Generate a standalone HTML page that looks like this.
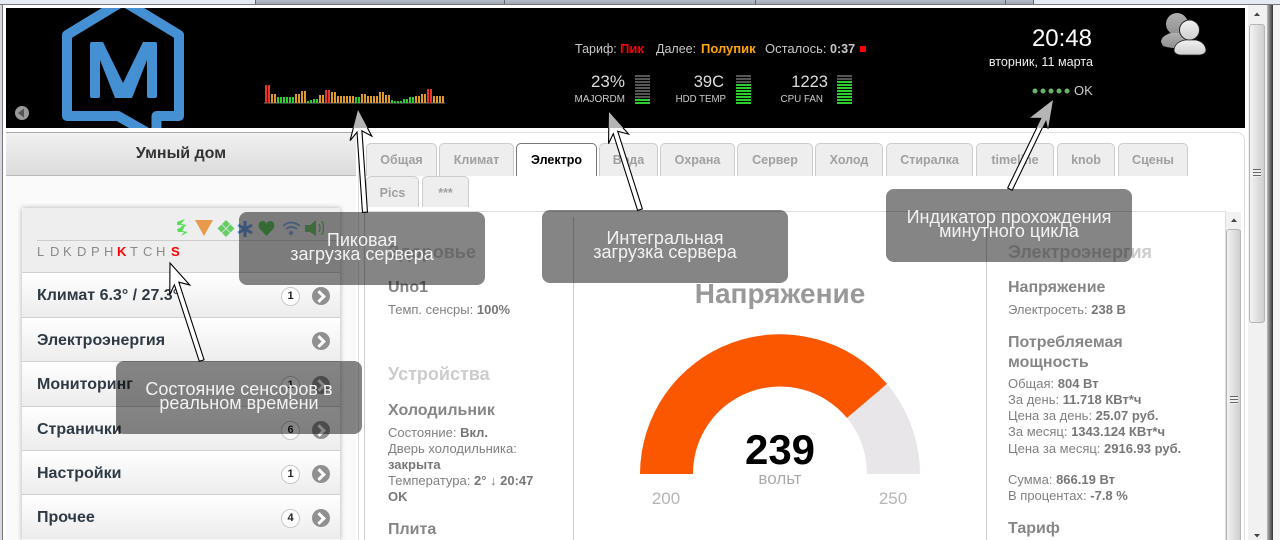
<!DOCTYPE html>
<html lang="ru"><head><meta charset="utf-8"><title>Умный дом</title>
<style>
html,body{margin:0;padding:0;width:1280px;height:540px;overflow:hidden;background:#fff}
body{position:relative;font-family:"Liberation Sans",Arial,sans-serif;font-size:13px;color:#808080}
.a{position:absolute}
.t{position:absolute;white-space:nowrap;line-height:16px}
.c{transform:translateX(-50%)}
b{font-weight:bold}
.h{font-weight:bold;font-size:16px;color:#868686}
.g{font-weight:bold;font-size:18px;color:#ccc}
.l b{color:#777}
.tab{position:absolute;box-sizing:border-box;background:#eee;border:1px solid #ccc;border-bottom:0;border-radius:5px 5px 0 0;text-align:center;font-size:12.5px;font-weight:bold;color:#a0a0a0;line-height:33px;height:33px}
.item{position:absolute;left:22px;width:318px;box-sizing:border-box;height:45px;background:linear-gradient(#fff,#ececec);border-top:1px solid #cfcfcf;font-weight:bold;font-size:16px;color:#2f3a44;line-height:46px;padding-left:15px}
.bub{position:absolute;left:259px;top:14px;width:17px;height:17px;border:1px solid #c8c8c8;border-radius:50%;background:#fff;color:#222;font-size:11px;line-height:17px;text-align:center;padding:0}
.go{position:absolute;left:290px;top:14px;width:18px;height:18px;border-radius:50%;background:#909090}
.go:after{content:"";position:absolute;left:3px;top:5px;width:6px;height:6px;border:solid #fff;border-width:3px 3px 0 0;transform:rotate(45deg)}
.s{position:absolute;top:244px;font-size:13px;line-height:16px;color:#8a8a8a}
.box{position:absolute;width:246px;height:73px;background:#858585;border-radius:8px;mix-blend-mode:multiply}
.bt{position:absolute;width:246px;text-align:center;color:#f2f2f2;font-size:18px;line-height:14px}
</style></head><body>

<!-- window top strip -->
<div class="a" style="left:0;top:0;width:1280px;height:4px;background:#e6ebf3"></div>
<div class="a" style="left:255px;top:0;width:778px;height:4px;background:linear-gradient(#b5bcc8,#9fa7b5)"></div>
<div class="a" style="left:255px;top:0;width:1px;height:4px;background:#666"></div>
<div class="a" style="left:504px;top:0;width:1px;height:4px;background:#666"></div>
<div class="a" style="left:755px;top:0;width:1px;height:4px;background:#666"></div>
<div class="a" style="left:1005px;top:0;width:1px;height:4px;background:#666"></div>
<div class="a" style="left:1033px;top:0;width:1px;height:4px;background:#666"></div>
<div class="a" style="left:0;top:4px;width:1280px;height:1px;background:#777"></div>
<div class="a" style="left:0;top:5px;width:2px;height:535px;background:#d4d8df"></div>
<div class="a" style="left:2px;top:5px;width:1px;height:535px;background:#777"></div>

<!-- outer scrollbar -->
<div class="a" style="left:1248px;top:5px;width:19px;height:535px;background:#f1f1f1"></div>
<div class="a" style="left:1249px;top:24px;width:16px;height:299px;box-sizing:border-box;border:1px solid #b5b5b5;border-radius:3px;background:linear-gradient(90deg,#f2f2f2,#cfcfcf)"></div>
<div class="a" style="left:1253px;top:169px;width:8px;height:8px;background:repeating-linear-gradient(#666 0 1px,#eee 1px 3px)"></div>
<div class="a" style="left:1267px;top:5px;width:6px;height:535px;background:linear-gradient(90deg,#bbb,#333)"></div>
<div class="a" style="left:1273px;top:5px;width:7px;height:535px;background:#f4f5f7"></div>

<!-- header -->
<div class="a" style="left:6px;top:8px;width:1239px;height:120px;background:#000;overflow:hidden"></div>

<!-- sidebar -->
<div class="a" style="left:6px;top:132px;width:350px;height:408px;background:#fafafa"></div>
<div class="a" style="left:6px;top:132px;width:350px;height:44px;box-sizing:border-box;border-top:1px solid #aaa;border-bottom:1px solid #bbb;background:linear-gradient(#f1f1f1,#dcdcdc);text-align:center;font-weight:bold;font-size:16px;line-height:41px;color:#333">Умный дом</div>

<div class="a" style="left:22px;top:208px;width:318px;height:332px;box-shadow:0 0 5px rgba(0,0,0,.3)"></div>
<div class="a" style="left:22px;top:208px;width:318px;height:64px;background:#eee"></div>
<div class="a" style="left:37px;top:240px;width:303px;height:1px;background:#ccc"></div>
<div class="s" style="left:37px">L</div><div class="s" style="left:50px">D</div><div class="s" style="left:63px">K</div><div class="s" style="left:77px">D</div><div class="s" style="left:91px">P</div><div class="s" style="left:104px">H</div><div class="s" style="left:117px;color:#f00;font-weight:bold">K</div><div class="s" style="left:130px">T</div><div class="s" style="left:143px">C</div><div class="s" style="left:156px">H</div><div class="s" style="left:171px;color:#f00;font-weight:bold">S</div>

<div class="item" style="top:272px">Климат 6.3° / 27.3°<span class="bub">1</span><span class="go"></span></div>
<div class="item" style="top:317px">Электроэнергия<span class="go"></span></div>
<div class="item" style="top:361px">Мониторинг<span class="bub">1</span><span class="go"></span></div>
<div class="item" style="top:406px">Странички<span class="bub">6</span><span class="go"></span></div>
<div class="item" style="top:450px">Настройки<span class="bub">1</span><span class="go"></span></div>
<div class="item" style="top:494px">Прочее<span class="bub">4</span><span class="go"></span></div>

<!-- main panel -->
<div class="a" style="left:358px;top:132px;width:887px;height:420px;box-sizing:border-box;border:1px solid #ddd;border-radius:8px;background:#fff"></div>
<div class="tab" style="left:366px;top:143px;width:71px">Общая</div>
<div class="tab" style="left:439px;top:143px;width:75px">Климат</div>
<div class="tab" style="left:516px;top:143px;width:81px;background:#fff;border-color:#777;color:#000">Электро</div>
<div class="tab" style="left:599px;top:143px;width:59px">Вода</div>
<div class="tab" style="left:660px;top:143px;width:75px">Охрана</div>
<div class="tab" style="left:737px;top:143px;width:76px">Сервер</div>
<div class="tab" style="left:815px;top:143px;width:68px">Холод</div>
<div class="tab" style="left:886px;top:143px;width:87px">Стиралка</div>
<div class="tab" style="left:976px;top:143px;width:78px">timeline</div>
<div class="tab" style="left:1057px;top:143px;width:58px">knob</div>
<div class="tab" style="left:1118px;top:143px;width:70px">Сцены</div>
<div class="tab" style="left:366px;top:176px;width:53px;height:31px">Pics</div>
<div class="tab" style="left:422px;top:176px;width:47px;height:31px">***</div>

<div class="a" style="left:364px;top:211px;width:861px;height:1px;background:#ddd"></div>
<div class="a" style="left:364px;top:211px;width:1px;height:329px;background:#ccc"></div>
<div class="a" style="left:573px;top:217px;width:1px;height:323px;background:#ccc"></div>
<div class="a" style="left:986px;top:217px;width:1px;height:323px;background:#ccc"></div>
<div class="a" style="left:1225px;top:211px;width:1px;height:329px;background:#ddd"></div>

<!-- inner scrollbar -->
<div class="a" style="left:1226px;top:212px;width:15px;height:328px;background:#f1f1f1"></div>
<div class="a" style="left:1226px;top:229px;width:15px;height:320px;box-sizing:border-box;border:1px solid #b5b5b5;border-radius:3px;background:linear-gradient(90deg,#f2f2f2,#cfcfcf)"></div>
<div class="a" style="left:1230px;top:396px;width:8px;height:8px;background:repeating-linear-gradient(#666 0 1px,#eee 1px 3px)"></div>

<!-- left column -->
<div class="t g" style="left:388px;top:244px">Здоровье</div>
<div class="t h" style="left:388px;top:280px">Uno1</div>
<div class="t l" style="left:388px;top:302px">Темп. сенсры: <b>100%</b></div>
<div class="t g" style="left:388px;top:366px">Устройства</div>
<div class="t h" style="left:388px;top:403px">Холодильник</div>
<div class="t l" style="left:388px;top:425px">Состояние: <b>Вкл.</b></div>
<div class="t l" style="left:388px;top:441px">Дверь холодильника:</div>
<div class="t l" style="left:388px;top:457px"><b>закрыта</b></div>
<div class="t l" style="left:388px;top:473px">Температура: <b>2° ↓ 20:47</b></div>
<div class="t l" style="left:388px;top:489px"><b>OK</b></div>
<div class="t h" style="left:388px;top:522px">Плита</div>

<!-- center gauge -->
<div class="t c" style="left:780px;top:277px;font-size:28px;line-height:34px;font-weight:bold;color:#999">Напряжение</div>
<svg class="a" style="left:0;top:0" width="1280" height="540">
<path d="M640 474A140 140 0 0 1 887 384L847 418A87 87 0 0 0 693 474Z" fill="#fb5700"/>
<path d="M887 384A140 140 0 0 1 920 474L867 474A87 87 0 0 0 847 418Z" fill="#e8e6e8"/>
</svg>
<div class="t c" style="left:780px;top:426px;font-size:42px;line-height:48px;font-weight:bold;color:#000">239</div>
<div class="t c" style="left:780px;top:471px;font-size:17px;color:#aaa">вольт</div>
<div class="t c" style="left:666px;top:491px;font-size:17px;color:#b5b5b5">200</div>
<div class="t c" style="left:893px;top:491px;font-size:17px;color:#b5b5b5">250</div>

<!-- right column -->
<div class="t g" style="left:1008px;top:244px">Электроэнергия</div>
<div class="t h" style="left:1008px;top:280px">Напряжение</div>
<div class="t l" style="left:1008px;top:302px">Электросеть: <b>238 В</b></div>
<div class="t h" style="left:1008px;top:335px">Потребляемая</div>
<div class="t h" style="left:1008px;top:355px">мощность</div>
<div class="t l" style="left:1008px;top:376px">Общая: <b>804 Вт</b></div>
<div class="t l" style="left:1008px;top:392px">За день: <b>11.718 КВт*ч</b></div>
<div class="t l" style="left:1008px;top:408px">Цена за день: <b>25.07 руб.</b></div>
<div class="t l" style="left:1008px;top:424px">За месяц: <b>1343.124 КВт*ч</b></div>
<div class="t l" style="left:1008px;top:441px">Цена за месяц: <b>2916.93 руб.</b></div>
<div class="t l" style="left:1008px;top:472px">Сумма: <b>866.19 Вт</b></div>
<div class="t l" style="left:1008px;top:488px">В процентах: <b>-7.8 %</b></div>
<div class="t h" style="left:1008px;top:521px">Тариф</div>

<!-- header graphics -->
<svg class="a" style="left:0;top:0" width="1280" height="540">
<defs>
<clipPath id="hd"><rect x="6" y="8" width="1239" height="120"/></clipPath>
<clipPath id="hd2"><rect x="0" y="0" width="1280" height="128"/></clipPath>
<linearGradient id="u1" x1="0" y1="0" x2="0" y2="1"><stop offset="0" stop-color="#b0b0b0"/><stop offset="1" stop-color="#909090"/></linearGradient>
<linearGradient id="u2" x1="0" y1="0" x2="0" y2="1"><stop offset="0" stop-color="#f2f2f2"/><stop offset="1" stop-color="#cfcfcf"/></linearGradient>
</defs>
<g clip-path="url(#hd)">
<path d="M146 132L118 116H67V35L123 1L179 35V116H156.500V135" fill="none" stroke="#4490d2" stroke-width="10" stroke-linejoin="round"/>
<path d="M90 44Q90 42 92 42H103L123 83L143 42H155Q157 42 157 44V96Q157 98 155 98H149Q147 98 147 96V60L132 98H115L100 60V96Q100 98 98 98H92Q90 98 90 96Z" fill="#4490d2"/>
</g>
<circle cx="22" cy="113" r="7" fill="#999"/><path d="M18 113L24 108.500V117.500Z" fill="#555"/>

<path d="M264 103H445" stroke="#777" stroke-width="1"/>
<g fill="none" stroke-width="2">
<path stroke="#e8362c" d="M266 103v-18M269 103v-18M326 103v-13M329 103v-13M428 103v-14M431 103v-14"/>
<path stroke="#dc9a2c" d="M272 103v-9M275 103v-9M296 103v-9M299 103v-9M302 103v-12M305 103v-12M320 103v-8M323 103v-8M332 103v-11M335 103v-11M338 103v-7M341 103v-7M344 103v-7M347 103v-7M350 103v-7M353 103v-7M362 103v-9M365 103v-9M368 103v-7M371 103v-7M374 103v-7M377 103v-7M380 103v-11M383 103v-11M386 103v-8M389 103v-8M416 103v-7M419 103v-7M422 103v-9M425 103v-9M434 103v-7M437 103v-7M440 103v-7M443 103v-7"/>
<path stroke="#2ecc2e" d="M278 103v-6M281 103v-6M284 103v-6M287 103v-6M290 103v-6M293 103v-6M308 103v-2M311 103v-3M314 103v-4M317 103v-4M356 103v-6M359 103v-6M392 103v-3M395 103v-2M398 103v-2M401 103v-2M404 103v-4M407 103v-4M410 103v-6M413 103v-6"/>
</g>

<g fill="none" stroke-width="15" stroke-dasharray="2 1">
<path stroke="#555" d="M642.500 75V104M743.500 75V104M844.500 75V104"/>
<path stroke="#2ecc2e" d="M642.500 99V104M743.500 84V104M844.500 81V104"/>
</g>
<rect x="860" y="46" width="6" height="6" fill="#f00"/>

<g fill="#6ab56a"><circle cx="1035" cy="91" r="2.500"/><circle cx="1043" cy="91" r="2.500"/><circle cx="1051" cy="91" r="2.500"/><circle cx="1059" cy="91" r="2.500"/><circle cx="1067" cy="91" r="2.500"/></g>

<circle cx="1177" cy="24" r="11" fill="url(#u1)"/>
<path d="M1161 42Q1161 36 1171 33H1184Q1193 36 1193 42V47Q1176 50 1163 46Z" fill="url(#u1)"/>
<circle cx="1189.500" cy="30" r="10" fill="url(#u2)" stroke="#222"/>
<path d="M1174 50Q1175 42 1185 40H1196Q1205 42 1206 50Q1206 54 1200 55H1180Q1174 54 1174 50Z" fill="url(#u2)" stroke="#222" stroke-width=".7"/>

<!-- state icons -->
<path d="M177 222L185 219L181 224L187 225L179 229L183 225L177 225ZM177 229L185 226L182 231L188 232L181 236L184 232L178 232Z" fill="#55dd55"/>
<path d="M195 220H213L204 236Z" fill="#e89a4c"/>
<g fill="#66cc66"><path d="M226 220L230 224L226 228L222 224Z"/><path d="M226 229L230 233L226 237L222 233Z"/><path d="M221.500 224.500L225.500 228.500L221.500 232.500L217.500 228.500Z"/><path d="M230.500 224.500L234.500 228.500L230.500 232.500L226.500 228.500Z"/></g>
<g stroke="#6fa0e8" stroke-width="3" fill="none"><path d="M245 221V237M238 225L252 233M252 225L238 233"/></g>
<path d="M266.500 236L259 228Q257.500 221 263 221Q265.500 221 266.500 224Q267.500 221 270 221Q275.500 221 274 228Z" fill="#66cc66"/>
<g fill="none" stroke="#8db4e8" stroke-width="2"><path d="M283 226Q291 219 300 226"/><path d="M286 229Q291 225 297 229"/></g><circle cx="291" cy="233" r="2.200" fill="#8db4e8"/>
<path d="M305 225H310L316 220V236L310 232H305Z" fill="#77cc77"/>
<path d="M319 224Q321 228 319 232M322 221Q325 228 322 235" fill="none" stroke="#77cc77" stroke-width="1.200"/>

<!-- scrollbar arrows -->
<g fill="#444"><path d="M1254 16H1260L1257 12.500Z"/><path d="M1254 534H1260L1257 537.500Z"/><path d="M1231 222H1237L1234 218.500Z"/></g>
</svg>

<!-- header texts -->
<div class="t" style="left:575px;top:41px;color:#c8c8c8;font-size:12.500px">Тариф:</div>
<div class="t" style="left:620px;top:41px;color:#f00;font-weight:bold">Пик</div>
<div class="t" style="left:656px;top:41px;color:#c8c8c8;font-size:12.500px">Далее:</div>
<div class="t" style="left:701px;top:41px;color:#ffa500;font-weight:bold">Полупик</div>
<div class="t" style="left:765px;top:41px;color:#c8c8c8">Осталось:</div>
<div class="t" style="left:830px;top:41px;color:#c8c8c8;font-weight:bold;font-size:12.500px">0:37</div>

<div class="t" style="right:655px;top:74px;font-size:17px;color:#ddd">23%</div>
<div class="t" style="right:655px;top:92px;font-size:10px;color:#ccc">MAJORDM</div>
<div class="t" style="right:556px;top:74px;font-size:16.500px;color:#ddd">39C</div>
<div class="t" style="right:554px;top:92px;font-size:9.700px;color:#ccc">HDD TEMP</div>
<div class="t" style="right:452px;top:74px;font-size:16.500px;color:#ddd">1223</div>
<div class="t" style="right:457px;top:92px;font-size:9.800px;color:#ccc">CPU FAN</div>

<div class="t" style="right:188px;top:25px;font-size:24px;line-height:28px;color:#fff">20:48</div>
<div class="t" style="right:187px;top:54px;color:#eee;font-size:12.600px">вторник, 11 марта</div>
<div class="t" style="left:1074px;top:83px;font-size:13px;color:#ccc">OK</div>

<!-- callouts -->
<div class="box" style="left:239px;top:212px"></div>
<div class="box" style="left:542px;top:210px"></div>
<div class="box" style="left:886px;top:189px"></div>
<div class="box" style="left:116px;top:361px"></div>
<div class="bt" style="left:239px;top:233px">Пиковая<br>загрузка сервера</div>
<div class="bt" style="left:542px;top:231px">Интегральная<br>загрузка сервера</div>
<div class="bt" style="left:886px;top:210px">Индикатор прохождения<br>минутного цикла</div>
<div class="bt" style="left:116px;top:382px">Состояние сенсоров в<br>реальном времени</div>

<!-- arrows -->
<svg class="a" style="left:0;top:0" width="1280" height="540">
<defs>
<path id="ar1" d="M0 0L12 27L2.500 21L2.500 102.500L-2.500 102.500L-2.500 22L-10 30Z"/>
<path id="ar3" d="M0 0L8 28L2.500 21L2.500 99L-2.500 99L-2.500 21L-13 26Z"/>
</defs>
<g fill="#fff" stroke="#000" stroke-width="1.100" stroke-linejoin="miter">
<use href="#ar1" transform="translate(358 110) rotate(-3.900)"/>
<use href="#ar1" transform="translate(609 112) rotate(-17.600)"/>
<use href="#ar3" transform="translate(1053 100) rotate(25.800)"/>
<use href="#ar1" transform="translate(170 263) rotate(-18)"/>
</g>
<g fill="#b5b5b5" clip-path="url(#hd2)">
<use href="#ar1" transform="translate(358 110) rotate(-3.900)"/>
<use href="#ar1" transform="translate(609 112) rotate(-17.600)"/>
<use href="#ar3" transform="translate(1053 100) rotate(25.800)"/>
</g>
</svg>
</body></html>
